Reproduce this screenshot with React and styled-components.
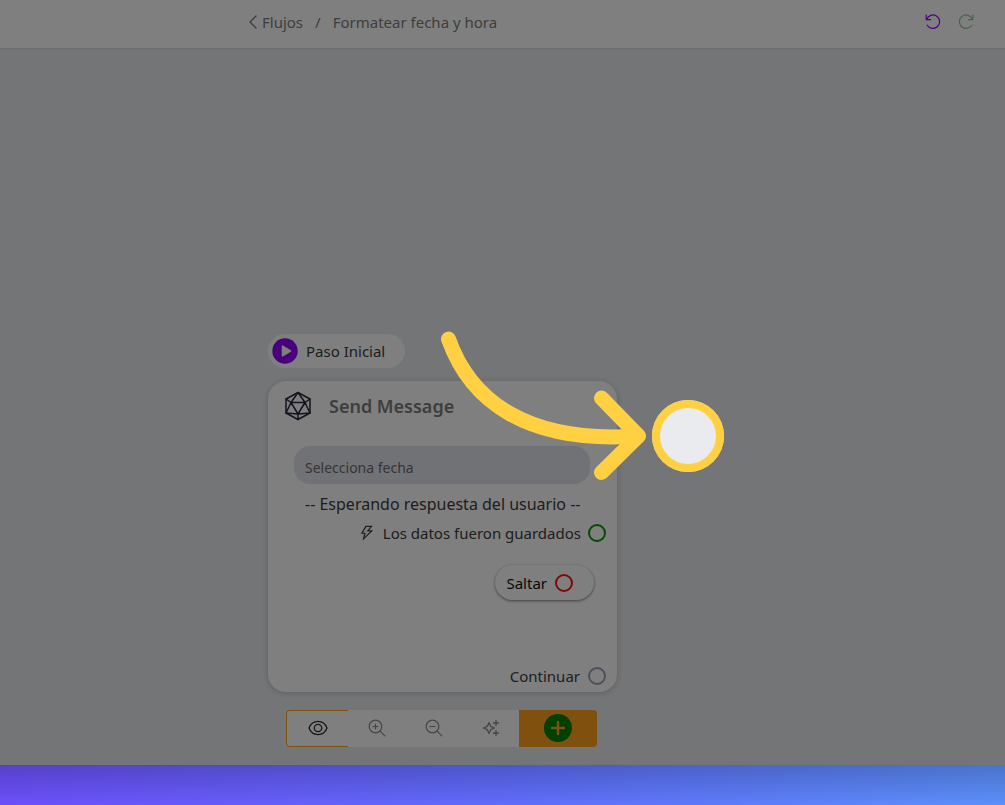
import React from "react";
import styled, { createGlobalStyle } from "styled-components";
import { AiOutlineThunderbolt } from "react-icons/ai";

const stroke = {
  fill: "none",
  stroke: "currentColor",
  strokeLinecap: "round",
  strokeLinejoin: "round"
};

export default function App() {
  return (
    <Page>
      <GlobalStyle />
      <Frame>
        <Header>
          <Breadcrumb aria-label="Ruta">
            <BackLink href="#flujos">
              <ChevronIcon />
              Flujos
            </BackLink>
            <Separator>/</Separator>
            <span>Formatear fecha y hora</span>
          </Breadcrumb>
          <HistoryButtons>
            <IconButton aria-label="Deshacer" $color="#9000ff">
              <UndoIcon />
            </IconButton>
            <IconButton aria-label="Rehacer" $color="#8fc7a3">
              <RedoIcon />
            </IconButton>
          </HistoryButtons>
        </Header>
        <Canvas>
          <StartTag>
            <PlayIcon />
            Paso Inicial
          </StartTag>
          <MessageNode />
          <Toolbar />
        </Canvas>
        <Arrow />
        <Spotlight />
      </Frame>
    </Page>
  );
}

function MessageNode() {
  return (
    <Card>
      <CardHeader>
        <D20Icon />
        <CardTitle>Send Message</CardTitle>
      </CardHeader>
      <CardBody>
        <DateInput placeholder="Selecciona fecha" aria-label="Fecha" />
        <Waiting>-- Esperando respuesta del usuario --</Waiting>
        <OutputRow>
          <AiOutlineThunderbolt size={18} />
          Los datos fueron guardados
          <Port $color="#009900" />
        </OutputRow>
        <SkipButton>
          Saltar
          <Port $color="#ff1010" />
        </SkipButton>
      </CardBody>
      <CardFooter>
        Continuar
        <Port $color="#9a9fb4" />
      </CardFooter>
    </Card>
  );
}

function Toolbar() {
  return (
    <Tools>
      <EyeButton aria-label="Vista previa">
        <EyeIcon />
      </EyeButton>
      <ToolButton aria-label="Acercar">
        <ZoomIcon plus />
      </ToolButton>
      <ToolButton aria-label="Alejar">
        <ZoomIcon />
      </ToolButton>
      <ToolButton aria-label="Ordenar">
        <SparkleIcon />
      </ToolButton>
      <AddButton aria-label="Agregar">
        <PlusIcon />
      </AddButton>
    </Tools>
  );
}

function ChevronIcon() {
  return (
    <svg width="10" height="16" viewBox="0 0 10 16" {...stroke} strokeWidth="1.4">
      <path d="M8 2 2 8l6 6" />
    </svg>
  );
}

function UndoIcon() {
  return (
    <svg width="16" height="16" viewBox="0 0 16 16" {...stroke} strokeWidth="1.2">
      <path d="M2.2 11.2A6.7 6.7 0 1 0 1.6 5.4" />
      <path d="M1.2 1.2v4.4h4.4" />
    </svg>
  );
}

function RedoIcon() {
  return (
    <svg width="16" height="16" viewBox="0 0 16 16" {...stroke} strokeWidth="1.2">
      <path d="M13.8 11.2A6.7 6.7 0 1 1 14.4 5.4" />
      <path d="M14.8 1.2v4.4h-4.4" />
    </svg>
  );
}

function PlayIcon() {
  return (
    <svg width="26" height="26" viewBox="0 0 26 26">
      <circle cx="13" cy="13" r="12.7" fill="#9000ff" />
      <path
        d="M10.5 8.2v9.6l8-4.8z"
        fill="#fff"
        stroke="#fff"
        strokeWidth="1.6"
        strokeLinejoin="round"
      />
    </svg>
  );
}

function D20Icon() {
  return (
    <svg width="28" height="30" viewBox="0 0 28 30" {...stroke} strokeWidth="1.5">
      <path d="M14 1.500 26 8v14l-12 6.500L2 22V8z" />
      <path d="M14 1.500 7 11.500h14zM7 11.500 14 23l7-11.500M2 8l5 3.500L2 22l12 1 12-1-5-10.500L26 8M14 23v5.500" />
    </svg>
  );
}

function EyeIcon() {
  return (
    <svg width="20" height="16" viewBox="0 0 20 16" {...stroke} strokeWidth="1.3">
      <path d="M1 8c1.600-4.200 5-6.600 9-6.600S17.400 3.800 19 8c-1.600 4.200-5 6.600-9 6.600S2.600 12.200 1 8z" />
      <circle cx="10" cy="8" r="3.700" />
    </svg>
  );
}

function ZoomIcon({ plus }) {
  return (
    <svg width="18" height="18" viewBox="0 0 18 18" {...stroke} strokeWidth="1.2">
      <circle cx="7.500" cy="7.500" r="6.300" />
      <path d="m12.200 12.200 4.600 4.600M5 7.500h5" />
      {plus && <path d="M7.500 5v5" />}
    </svg>
  );
}

function SparkleIcon() {
  return (
    <svg width="18" height="18" viewBox="0 0 18 18" {...stroke} strokeWidth="1.3">
      <path d="M7 3.500 8.700 7.300 12.500 9 8.700 10.700 7 14.500 5.300 10.700 1.500 9 5.300 7.300z" />
      <path d="M14 1.500v5M11.500 4h5M14 11.500v5M11.500 14h5" />
    </svg>
  );
}

function PlusIcon() {
  return (
    <svg width="28" height="28" viewBox="0 0 28 28">
      <circle cx="14" cy="14" r="14" fill="#008000" />
      <path
        d="M14 8v12M8 14h12"
        stroke="#ffa01c"
        strokeWidth="2.400"
        strokeLinecap="round"
      />
    </svg>
  );
}

function Arrow() {
  return (
    <ArrowSvg width="216" height="160" viewBox="0 0 216 160" {...stroke} strokeWidth="15">
      <path d="M13.500 14C35 75 91 119 203 111" />
      <path d="M166.500 73l37 38-37 36.500" />
    </ArrowSvg>
  );
}

const GlobalStyle = createGlobalStyle`
  * {
    box-sizing: border-box;
  }

  body {
    margin: 0;
    font-family: "Noto Sans", sans-serif;
    font-size: 15px;
    line-height: 20px;
    color: #3c3c3c;
  }

  button,
  input {
    font: inherit;
    color: inherit;
  }

  svg {
    display: block;
    flex: none;
  }
`;

const Page = styled.div`
  min-height: 100vh;
  padding-bottom: 40px;
  display: flex;
  background: linear-gradient(0deg, transparent, rgba(0, 0, 0, 0.2)) bottom /
      100% 40px no-repeat,
    linear-gradient(90deg, #6c50fb, #606cfb 50%, #5c90fb);
`;

const Frame = styled.main`
  flex: 1;
  position: relative;
  overflow: hidden;
  display: flex;
  flex-direction: column;
  background: #e9ebee;
`;

const Header = styled.header`
  height: 48px;
  padding: 0 31px 4px 248px;
  display: flex;
  align-items: center;
  justify-content: space-between;
  background: #fff;
  box-shadow: 0 1px 2px rgba(0, 0, 0, 0.1);
`;

const Breadcrumb = styled.nav`
  display: flex;
  align-items: center;
  color: #7c7c7c;
`;

const BackLink = styled.a`
  display: flex;
  align-items: center;
  gap: 4px;
  color: inherit;
  text-decoration: none;
`;

const Separator = styled.span`
  margin: 0 12px;
`;

const HistoryButtons = styled.div`
  display: flex;
  gap: 17px;
`;

const IconButton = styled.button`
  padding: 0;
  border: 0;
  background: none;
  color: ${({ $color }) => $color};
`;

const Canvas = styled.section`
  flex: 1;
  padding: 0 0 18px 268px;
  display: flex;
  flex-direction: column;
  justify-content: flex-end;
  align-items: flex-start;
`;

const StartTag = styled.div`
  height: 34px;
  padding: 0 20px 0 4px;
  display: flex;
  align-items: center;
  gap: 8px;
  border-radius: 17px;
  background: #fff;
`;

const Card = styled.article`
  width: 349px;
  margin: 13px 0 18px;
  border-radius: 18px;
  background: #fff;
  box-shadow: 0 1px 6px rgba(0, 0, 0, 0.2);
`;

const CardHeader = styled.header`
  height: 50px;
  padding: 0 16px;
  display: flex;
  align-items: center;
  gap: 17px;
  color: #2c2440;
`;

const CardTitle = styled.h2`
  margin: 0;
  font-size: 18px;
  font-weight: 600;
  color: #7c7c7c;
`;

const CardBody = styled.div`
  padding: 15px 11px 0 26px;
  display: flex;
  flex-direction: column;
`;

const DateInput = styled.input`
  width: 296px;
  height: 38px;
  padding: 4px 11px 0;
  border: 0;
  border-radius: 16px;
  background: #e2e4ec;
  font-size: 14px;

  &::placeholder {
    color: #6c6c6c;
    opacity: 1;
  }
`;

const Waiting = styled.p`
  margin: 10px 0 9px 11px;
  font-size: 16px;
  white-space: nowrap;
`;

const OutputRow = styled.div`
  display: flex;
  align-items: center;
  justify-content: flex-end;
  gap: 7px;
`;

const Port = styled.span`
  flex: none;
  width: 18px;
  height: 18px;
  border: 2px solid ${({ $color }) => $color};
  border-radius: 50%;
`;

const SkipButton = styled.button`
  align-self: flex-end;
  height: 35px;
  margin: 22px 12px 0 0;
  padding: 0 21px 0 11px;
  display: flex;
  align-items: center;
  gap: 8px;
  border: 0;
  border-radius: 18px;
  background: #fff;
  box-shadow: 0 1px 3px rgba(0, 0, 0, 0.5);
  color: #101010;
`;

const CardFooter = styled.footer`
  padding: 66px 11px 6px;
  display: flex;
  align-items: center;
  justify-content: flex-end;
  gap: 8px;
`;

const Tools = styled.div`
  height: 37px;
  margin-left: 18px;
  display: flex;
`;

const ToolButton = styled.button`
  width: 57px;
  padding: 0 0 1px;
  display: flex;
  align-items: center;
  justify-content: center;
  border: 0;
  background: #fff;
  color: #8c8c8c;
`;

const EyeButton = styled(ToolButton)`
  width: 62px;
  border: 1px solid #ffa41c;
  border-right: 0;
  border-radius: 4px 0 0 4px;
  color: #303038;
`;

const AddButton = styled(ToolButton)`
  width: 78px;
  border-radius: 0 4px 4px 0;
  background: #ffa01c;
`;

/* sits above the dimmed area */
const ArrowSvg = styled.svg`
  position: absolute;
  z-index: 2;
  left: 435px;
  top: 325px;
  color: #ffd042;
`;

/* the spread shadow dims everything outside the circle */
const Spotlight = styled.div`
  position: absolute;
  z-index: 1;
  left: 652px;
  top: 400px;
  width: 72px;
  height: 72px;
  border: 8px solid #ffd042;
  border-radius: 50%;
  box-shadow: 0 0 0 2000px rgba(0, 0, 0, 0.5);
`;
